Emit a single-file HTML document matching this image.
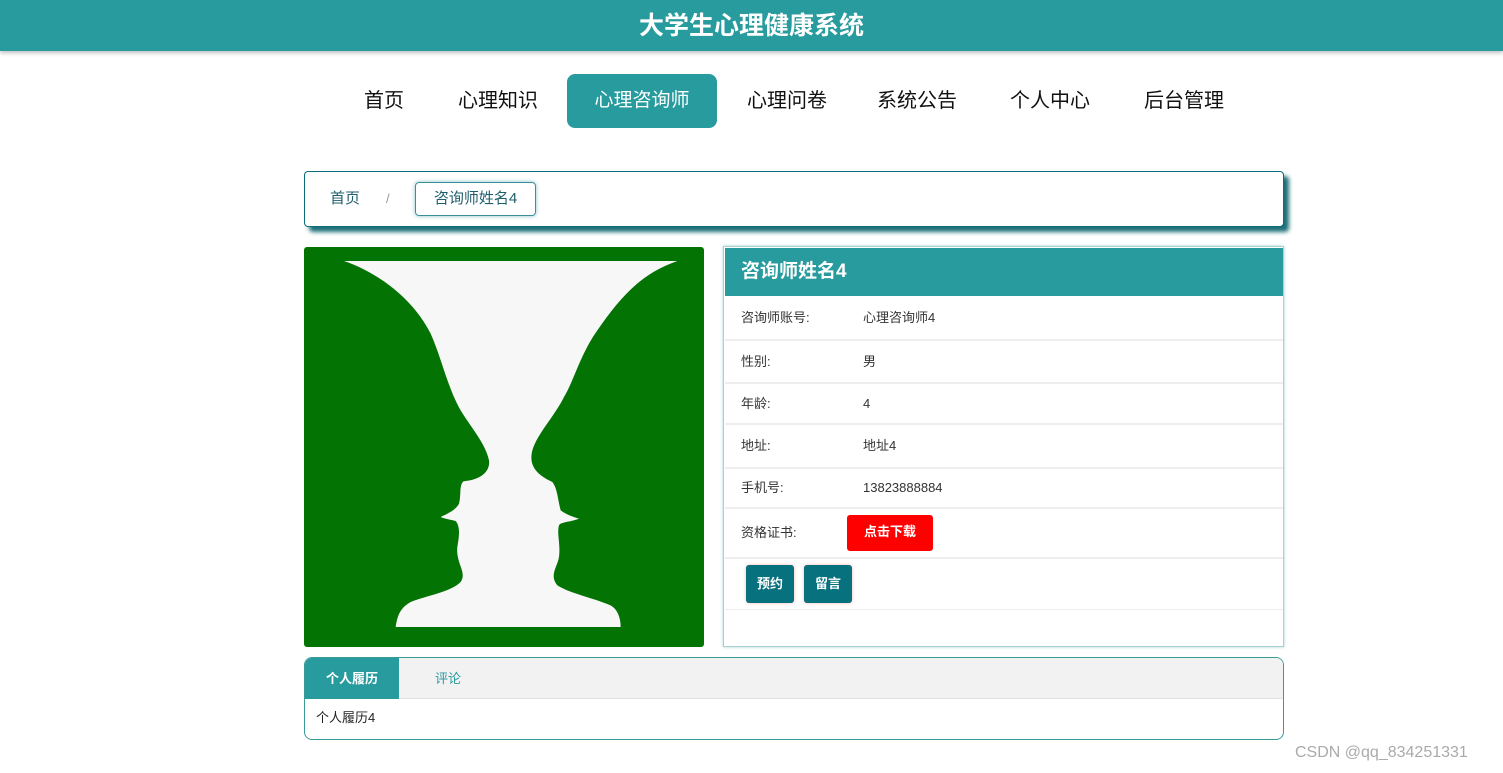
<!DOCTYPE html>
<html><head><meta charset="utf-8"><style>
*{margin:0;padding:0;box-sizing:border-box}
body{width:1503px;height:773px;background:#fff;font-family:"Liberation Sans","Noto Sans CJK SC",sans-serif;position:relative;overflow:hidden;color:#333}
.a{position:absolute}
.hdr{left:0;top:0;width:1503px;height:51px;background:#279b9d;box-shadow:0 2px 4px rgba(0,0,0,.25);color:#fff;font-size:25px;font-weight:bold;text-align:center;line-height:53px}
.nav{top:87px;font-size:20px;color:#111;line-height:28px}
.act{left:567px;top:74px;width:150px;height:54px;background:#279b9d;border-radius:8px;color:#fff;font-size:19px;text-align:center;line-height:54px}
.bc{left:304px;top:171px;width:980px;height:56px;border:1px solid #0a6e7b;border-radius:4px;box-shadow:5px 5px 4px #1d6e78;background:#fff}
.row{left:725px;width:558px;border-bottom:2px solid #eee;font-size:13px;color:#333}
.row span{position:absolute;line-height:16px}
</style></head><body>
<div class="a hdr">大学生心理健康系统</div>
<div class="a nav" style="left:364px">首页</div>
<div class="a nav" style="left:458px">心理知识</div>
<div class="a act">心理咨询师</div>
<div class="a nav" style="left:747px">心理问卷</div>
<div class="a nav" style="left:877px">系统公告</div>
<div class="a nav" style="left:1010px">个人中心</div>
<div class="a nav" style="left:1144px">后台管理</div>

<div class="a bc"></div>
<div class="a" style="left:330px;top:190px;font-size:15px;line-height:18px;color:#1f5e6e">首页</div>
<div class="a" style="left:386px;top:191px;font-size:13px;color:#999">/</div>
<div class="a" style="left:415px;top:182px;width:121px;height:34px;border:1px solid #3a8f9c;border-radius:4px;box-shadow:0 0 4px #8bbfc8;font-size:15px;color:#1f5e6e;text-align:center;line-height:32px">咨询师姓名4</div>

<div class="a" style="left:304px;top:247px;width:400px;height:400px;background:#037303;border-radius:3px;overflow:hidden">
<svg width="400" height="400" viewBox="0 0 1200 1200"><path fill="#f7f7f7" d="M120 42 L1120 42 C1010 80 950 150 880 250 C830 320 810 400 780 450 C750 510 700 560 685 610 C675 650 690 680 745 705 C760 725 760 750 770 790 C790 805 810 810 825 815 C800 825 770 825 765 835 C758 860 770 890 765 930 C760 960 735 985 760 1015 C800 1040 860 1050 920 1075 C945 1090 950 1120 950 1140 L275 1140 C280 1110 285 1085 320 1065 C370 1045 440 1035 470 1005 C490 975 455 950 460 900 C465 870 470 840 455 822 C440 818 420 815 410 810 C430 800 455 790 465 770 C472 745 465 715 478 703 C520 700 560 680 555 640 C545 590 500 540 470 490 C430 420 415 340 380 260 C330 160 230 80 120 42 Z"/></svg>
</div>

<div class="a" style="left:723px;top:246px;width:561px;height:401px;border:1px solid #a8d2d2;box-shadow:0 0 3px #a8d2d2;background:#fff"></div>
<div class="a" style="left:725px;top:248px;width:558px;height:48px;background:#279b9d;color:#fff;font-size:19px;font-weight:bold;line-height:48px;padding-left:16px">咨询师姓名4</div>
<div class="a row" style="top:296px;height:45px"><span style="left:16px;top:14px">咨询师账号:</span><span style="left:138px;top:14px">心理咨询师4</span></div>
<div class="a row" style="top:341px;height:43px"><span style="left:16px;top:13px">性别:</span><span style="left:138px;top:13px">男</span></div>
<div class="a row" style="top:384px;height:41px"><span style="left:16px;top:12px">年龄:</span><span style="left:138px;top:12px">4</span></div>
<div class="a row" style="top:425px;height:44px"><span style="left:16px;top:13px">地址:</span><span style="left:138px;top:13px">地址4</span></div>
<div class="a row" style="top:469px;height:40px"><span style="left:16px;top:11px">手机号:</span><span style="left:138px;top:11px">13823888884</span></div>
<div class="a row" style="top:509px;height:50px"><span style="left:16px;top:16px">资格证书:</span></div>
<div class="a" style="left:847px;top:515px;width:86px;height:36px;background:#f00;border-radius:3px;color:#fff;font-size:13px;font-weight:bold;text-align:center;line-height:34px">点击下载</div>
<div class="a row" style="top:559px;height:51px;border-bottom:1px solid #eee"></div>
<div class="a" style="left:746px;top:565px;width:48px;height:38px;background:#07717e;border-radius:3px;color:#fff;font-size:13px;font-weight:bold;text-align:center;line-height:38px;box-shadow:0 0 3px #f3b6b6">预约</div>
<div class="a" style="left:804px;top:565px;width:48px;height:38px;background:#07717e;border-radius:3px;color:#fff;font-size:13px;font-weight:bold;text-align:center;line-height:38px;box-shadow:0 0 3px #f3b6b6">留言</div>

<div class="a" style="left:304px;top:657px;width:980px;height:83px;border:1px solid #3a9a9a;border-radius:8px;overflow:hidden;background:#fff">
<div style="height:41px;background:#f2f2f2;border-bottom:1px solid #e2e2e2;position:relative">
<div style="position:absolute;left:0;top:0;width:94px;height:41px;background:#279b9d;color:#fff;font-size:13px;font-weight:bold;text-align:center;line-height:41px">个人履历</div>
<div style="position:absolute;left:130px;top:0;font-size:13px;color:#279b9d;line-height:41px">评论</div>
</div>
<div style="font-size:13px;line-height:16px;color:#222;padding:11px 0 0 11px">个人履历4</div>
</div>
<div class="a" style="left:1295px;top:744px;font-size:16px;color:#aaa">CSDN @qq_834251331</div>
</body></html>
